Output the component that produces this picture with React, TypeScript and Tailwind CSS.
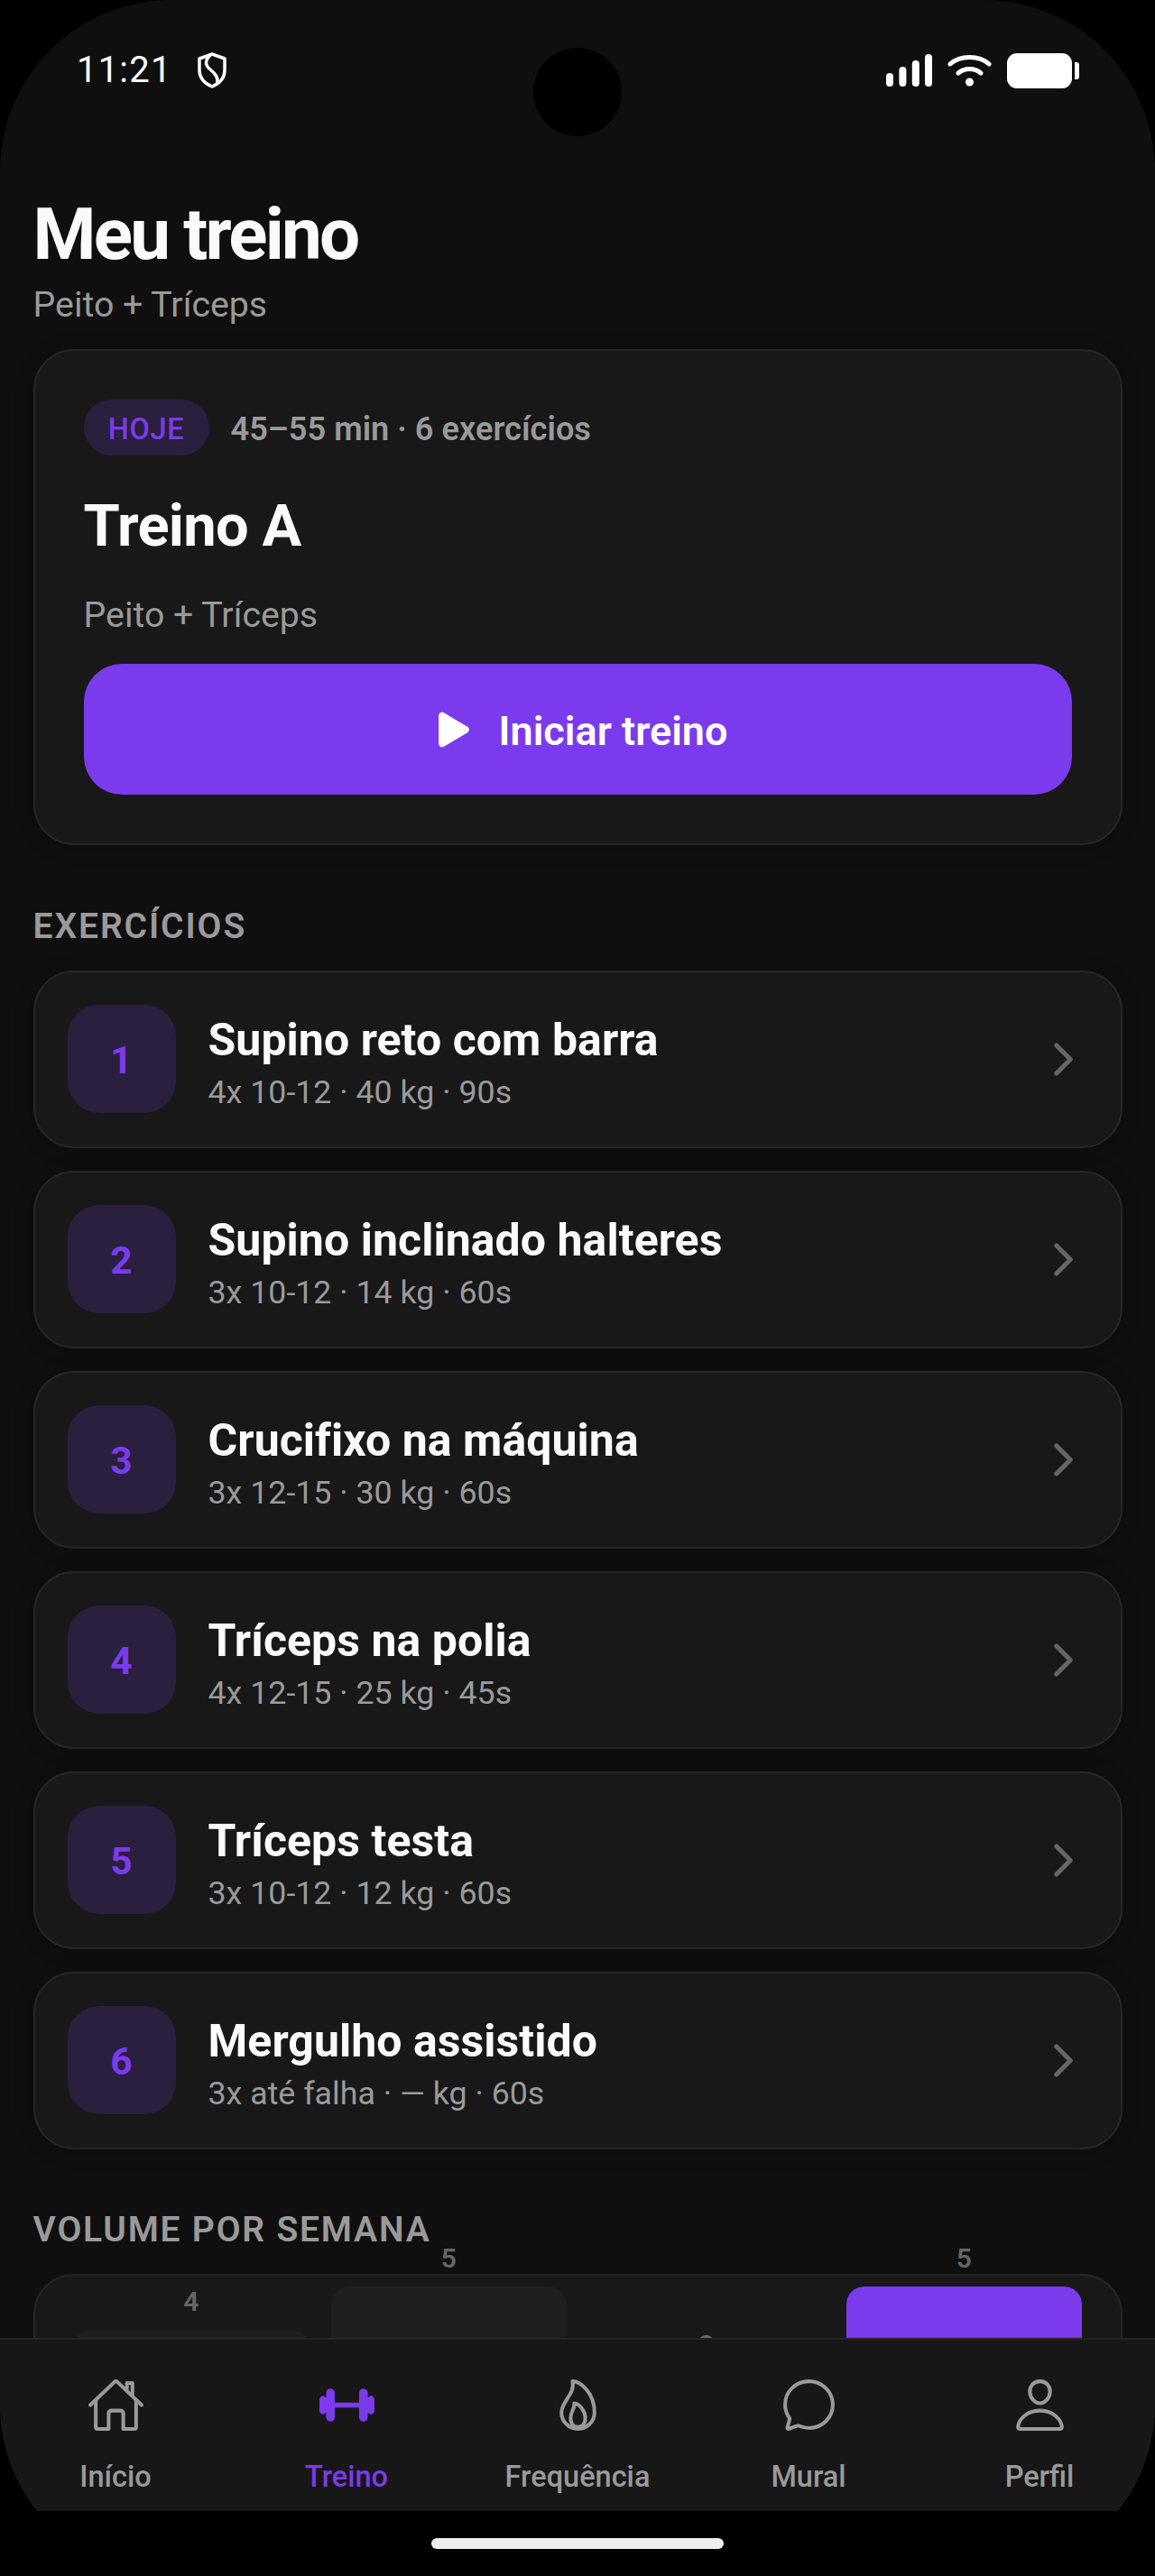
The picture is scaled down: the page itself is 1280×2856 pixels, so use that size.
import { IoBarbell, IoChatbubbleOutline, IoChevronForward, IoFlameOutline, IoHomeOutline, IoPersonOutline, IoPlay } from 'react-icons/io5';

const exercises = [
  { name: 'Supino reto com barra', detail: '4x 10-12 · 40 kg · 90s' },
  { name: 'Supino inclinado halteres', detail: '3x 10-12 · 14 kg · 60s' },
  { name: 'Crucifixo na máquina', detail: '3x 12-15 · 30 kg · 60s' },
  { name: 'Tríceps na polia', detail: '4x 12-15 · 25 kg · 45s' },
  { name: 'Tríceps testa', detail: '3x 10-12 · 12 kg · 60s' },
  { name: 'Mergulho assistido', detail: '3x até falha · — kg · 60s' },
];

const weeks = [4, 5, 3, 5];

const tabs = [
  { label: 'Início', icon: IoHomeOutline },
  { label: 'Treino', icon: IoBarbell, active: true },
  { label: 'Frequência', icon: IoFlameOutline },
  { label: 'Mural', icon: IoChatbubbleOutline },
  { label: 'Perfil', icon: IoPersonOutline },
];

function StatusBar() {
  return (
    <div className="flex justify-between pt-[54px] pl-[85px] pr-[84px] text-white">
      <div className="flex items-center gap-[27px]">
        <span className="text-[40px] leading-[48px] tracking-[1.2px]">11:21</span>
        <svg width="34" height="40" viewBox="0 0 34 40" fill="none" stroke="white" strokeWidth="3.5" strokeLinejoin="round" strokeLinecap="round">
          <path d="M17 2 L31 7 V20 C31 29 24 35 17 38 C10 35 3 29 3 20 V7 Z" />
          <path d="M15 3 C9 9 9 14 15 19 C21 24 24 28 23 34" />
        </svg>
      </div>
      <div className="flex items-center gap-[17px] h-[48px]">
        <svg width="51" height="36" viewBox="0 0 51 36" fill="white">
          <rect x="0" y="21" width="8" height="15" rx="4" />
          <rect x="14.4" y="14" width="8" height="22" rx="4" />
          <rect x="28.8" y="7" width="8" height="29" rx="4" />
          <rect x="43" y="0" width="8" height="36" rx="4" />
        </svg>
        <svg width="49" height="36" viewBox="0 0 49 36" fill="none" stroke="white" strokeWidth="5" strokeLinecap="round">
          <path d="M3 11 C14 1 35 1 46 11" />
          <path d="M12 21 C19 15 30 15 37 21" />
          <circle cx="24.5" cy="31" r="4.5" fill="white" stroke="none" />
        </svg>
        <div className="flex items-center gap-[3px]">
          <div className="w-[72px] h-[39px] rounded-[11px] bg-white" />
          <div className="w-[5px] h-[19px] rounded-r-[3px] bg-white" />
        </div>
      </div>
    </div>
  );
}

function ExerciseRow({ index, name, detail }: { index: number; name: string; detail: string }) {
  return (
    <div className="flex items-center h-[197px] px-[36px] gap-[36px] rounded-[45px] border-[2.5px] border-[#262626] bg-[#181818] shadow-[0_2px_20px_rgba(0,0,0,0.25)]">
      <div className="w-[120px] h-[120px] shrink-0 flex items-center justify-center pt-[4px] rounded-[35px] bg-[#2a1f3e] text-[42.5px] font-bold text-[#7c3aed]">
        {index}
      </div>
      <div className="flex-1 min-w-0 pt-[7px]">
        <div className="text-[50px] leading-[60px] font-bold tracking-[0.05px] text-[#fafafa]">{name}</div>
        <div className="mt-[7px] text-[35.75px] leading-[42px] text-[#9a9a9a]">{detail}</div>
      </div>
      <IoChevronForward size={55} className="text-[#666666] shrink-0" />
    </div>
  );
}

export default function App() {
  return (
    <div className="w-[1280px] h-[2856px] bg-black font-['Roboto',sans-serif]">
      <div className="relative w-full h-full flex flex-col rounded-[190px] overflow-hidden bg-[#0f0f0f]">
        <div className="absolute left-[591px] top-[53px] w-[98px] h-[98px] rounded-full bg-black" />

        <div className="flex-1 min-h-0 overflow-hidden">
          <StatusBar />
          <div className="px-[36.5px]">
            <h1 className="mt-[110px] text-[80px] leading-[96px] font-bold tracking-[-2.8px] text-[#fafafa]">Meu treino</h1>
            <p className="mt-[8px] text-[39.3px] leading-[45px] text-[#9a9a9a]">Peito + Tríceps</p>

            <section className="mt-[26px] rounded-[45px] border-[2.5px] border-[#262626] bg-[#181818] px-[54px] pt-[54px] pb-[54px] shadow-[0_2px_20px_rgba(0,0,0,0.25)]">
              <div className="flex items-center gap-[24px]">
                <span className="flex items-center justify-center w-[139px] h-[62px] pt-[4px] rounded-full bg-[#2a1f3e] text-[32.5px] font-medium tracking-[0.7px] text-[#7c3aed]">HOJE</span>
                <span className="pt-[5px] text-[36.2px] font-semibold text-[#9a9a9a]">45–55 min · 6 exercícios</span>
              </div>
              <h2 className="mt-[39px] text-[65px] leading-[78px] font-bold tracking-[-0.7px] text-[#fafafa]">Treino A</h2>
              <p className="mt-[38px] text-[39.3px] leading-[45px] text-[#9a9a9a]">Peito + Tríceps</p>
              <button className="mt-[31px] w-full h-[145px] flex items-center justify-center gap-[25px] rounded-[42px] bg-[#7c3aed] text-[45px] font-semibold text-white">
                <IoPlay size={54} className="translate-x-[2px]" />
                <span className="pt-[4px]">Iniciar treino</span>
              </button>
            </section>

            <h3 className="mt-[68px] mb-[25.5px] text-[39px] leading-[45px] font-semibold tracking-[1.9px] text-[#9a9a9a]">EXERCÍCIOS</h3>
            <div className="flex flex-col gap-[25px]">
              {exercises.map((ex, i) => (
                <ExerciseRow key={ex.name} index={i + 1} name={ex.name} detail={ex.detail} />
              ))}
            </div>

            <h3 className="mt-[67.5px] mb-[26px] text-[39px] leading-[45px] font-semibold tracking-[1.8px] text-[#9a9a9a]">VOLUME POR SEMANA</h3>
            <div className="rounded-[45px] border-[2.5px] border-[#262626] bg-[#181818] px-[42.5px] pt-[52px] pb-[50px]">
              <div className="flex items-end gap-[24px] h-[200px]">
                {weeks.map((v, i) => (
                  <div key={i} className="flex-1 flex flex-col items-center">
                    <span className="mb-[14px] text-[30px] leading-[35px] font-semibold text-[#666666]">{v}</span>
                    <div
                      className={i === 3 ? 'w-full rounded-t-[20px] bg-[#7c3aed]' : 'w-full rounded-t-[20px] bg-[#1f1f1f]'}
                      style={{ height: v * 48 }}
                    />
                  </div>
                ))}
              </div>
            </div>
          </div>
        </div>

        <nav className="relative flex shrink-0 h-[192px] pt-[40px] border-t-[2px] border-[#242424] bg-[#171717]">
          {tabs.map(({ label, icon: Icon, active }) => (
            <div key={label} className="flex-1 flex flex-col items-center">
              <Icon size={65} className={active ? 'text-[#7c3aed]' : 'text-[#9a9a9a]'} />
              <span className={active ? 'mt-[28px] text-[32.5px] leading-[39px] font-medium text-[#7c3aed]' : 'mt-[28px] text-[32.5px] leading-[39px] font-medium text-[#9a9a9a]'}>{label}</span>
            </div>
          ))}
        </nav>
        <div className="shrink-0 h-[72px] pt-[30px] bg-black flex justify-center">
          <div className="w-[324px] h-[12px] rounded-full bg-[#eeeeee]" />
        </div>
      </div>
    </div>
  );
}
